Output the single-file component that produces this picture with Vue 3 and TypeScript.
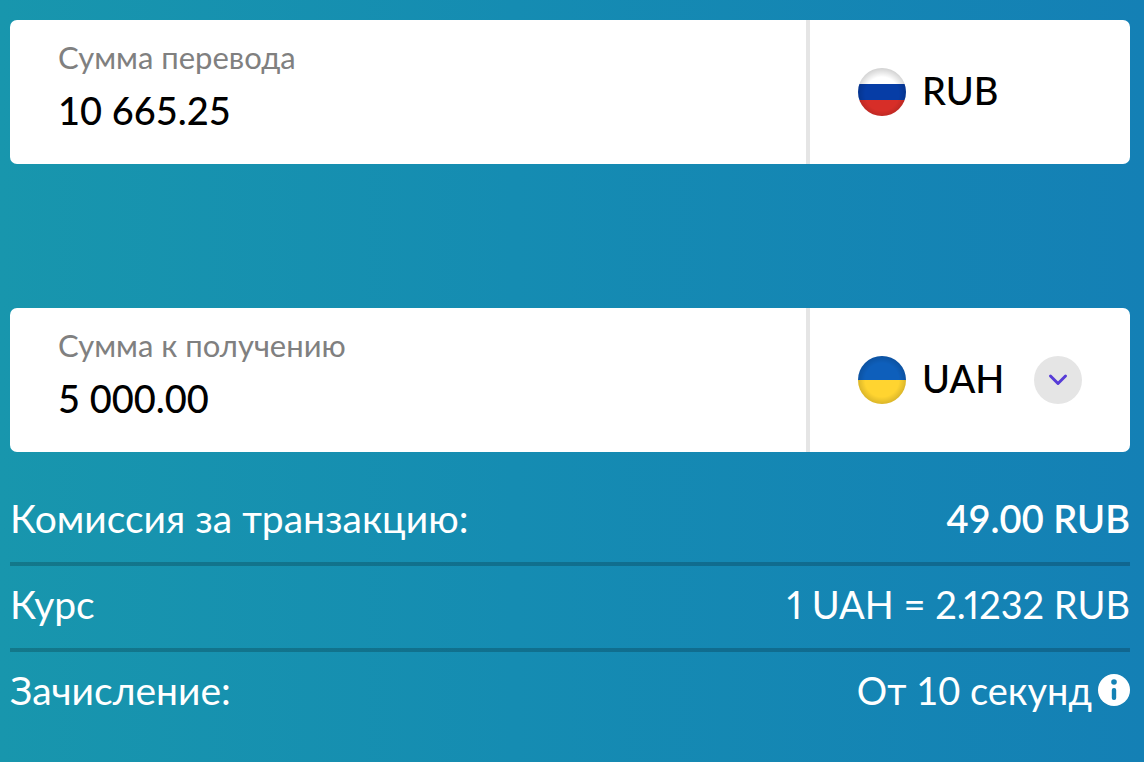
<script setup lang="ts">
import { ref } from 'vue'

const sendAmount = ref('10 665.25')
const receiveAmount = ref('5 000.00')
const receiveCurrency = ref('UAH')
</script>

<template>
  <main class="page">
    <form class="calculator" @submit.prevent>
      <section class="card">
        <div class="amount">
          <label class="amount-label" for="send-amount">Сумма перевода</label>
          <input id="send-amount" v-model="sendAmount" class="amount-input" type="text" inputmode="decimal" />
        </div>
        <div class="currency">
          <svg class="flag" viewBox="0 0 48 48" aria-hidden="true">
            <defs>
              <clipPath id="ru-clip"><circle cx="24" cy="24" r="24" /></clipPath>
              <radialGradient id="ru-shade" cy="0.54" r="0.54">
                <stop offset="0.65" stop-color="#000" stop-opacity="0" />
                <stop offset="1" stop-color="#000" stop-opacity="0.18" />
              </radialGradient>
            </defs>
            <g clip-path="url(#ru-clip)">
              <rect width="48" height="16" fill="#fff" />
              <rect y="16" width="48" height="16" fill="#063da6" />
              <rect y="32" width="48" height="16" fill="#d72e28" />
              <rect width="48" height="48" fill="url(#ru-shade)" />
            </g>
          </svg>
          <span class="code">RUB</span>
        </div>
      </section>

      <section class="card">
        <div class="amount">
          <label class="amount-label" for="receive-amount">Сумма к получению</label>
          <input id="receive-amount" v-model="receiveAmount" class="amount-input" type="text" inputmode="decimal" />
        </div>
        <div class="currency">
          <svg class="flag" viewBox="0 0 48 48" aria-hidden="true">
            <defs>
              <clipPath id="ua-clip"><circle cx="24" cy="24" r="24" /></clipPath>
              <radialGradient id="ua-shade" r="0.54">
                <stop offset="0.65" stop-color="#000" stop-opacity="0" />
                <stop offset="1" stop-color="#000" stop-opacity="0.18" />
              </radialGradient>
            </defs>
            <g clip-path="url(#ua-clip)">
              <rect width="48" height="24" fill="#0e5fbb" />
              <rect y="24" width="48" height="24" fill="#ffd430" />
              <rect width="48" height="48" fill="url(#ua-shade)" />
            </g>
          </svg>
          <select v-model="receiveCurrency" class="code code-select" aria-label="Валюта получения">
            <option value="UAH">UAH</option>
          </select>
          <svg class="chevron" viewBox="0 0 48 48" aria-hidden="true">
            <circle cx="24" cy="24" r="24" fill="#e5e5e5" />
            <path d="M16.5 20 24 27.5 31.5 20" fill="none" stroke="#573cd7" stroke-width="3" stroke-linecap="round" stroke-linejoin="round" />
          </svg>
        </div>
      </section>
    </form>

    <dl class="details">
      <div class="row">
        <dt>Комиссия за транзакцию:</dt>
        <dd class="strong">49.00 RUB</dd>
      </div>
      <div class="row">
        <dt>Курс</dt>
        <dd class="rate">1 UAH = 2.1232 RUB</dd>
      </div>
      <div class="row">
        <dt>Зачисление:</dt>
        <dd>
          От 10 секунд
          <button class="info" type="button" aria-label="Подробнее о сроках">
            <svg viewBox="0 0 32 32" aria-hidden="true">
              <circle cx="16" cy="16" r="16" fill="#fff" />
              <circle cx="16" cy="8" r="2.8" fill="#1482b4" />
              <rect x="13.8" y="14" width="4.4" height="12" rx="2" fill="#1482b4" />
            </svg>
          </button>
        </dd>
      </div>
    </dl>
  </main>
</template>

<style>
body {
  margin: 0;
}
</style>

<style scoped>
.page {
  box-sizing: border-box;
  min-height: 100vh;
  padding: 20px 14px 20px 10px;
  background: linear-gradient(90deg, #1896ad 0%, #158cb2 45%, #1480b5 100%);
  color: #fff;
  font-family: Lato, "Noto Sans", sans-serif;
  font-size: 38px;
  line-height: 44px;
}

.calculator {
  display: flex;
  flex-direction: column;
  gap: 144px;
}

.card {
  display: flex;
  min-height: 144px;
  border-radius: 7px;
  background: #fff;
  color: #000;
}

.amount {
  display: flex;
  flex: 1;
  flex-direction: column;
  gap: 12px;
  box-sizing: border-box;
  min-width: 0;
  padding: 20px 48px;
}

.amount-label {
  color: #808080;
  font-size: 31px;
  line-height: 34px;
}

.amount-input {
  width: 100%;
  height: 48px;
  padding: 0;
  border: 0;
  outline: 0;
  background: transparent;
  color: inherit;
  font: inherit;
  font-weight: 500;
}

.currency {
  display: flex;
  box-sizing: border-box;
  flex: 0 0 324px;
  align-items: center;
  gap: 16px;
  padding: 0 48px;
  border-left: 4px solid #e5e5e5;
}

.flag,
.chevron {
  flex: none;
  width: 48px;
  height: 48px;
}

.code {
  box-sizing: border-box;
  flex: 1;
  height: 48px;
  min-width: 0;
  padding: 0 0 4px;
  font-weight: 500;
}

.code-select {
  border: 0;
  outline: 0;
  appearance: none;
  background: transparent;
  color: inherit;
  font-family: inherit;
  font-size: inherit;
  line-height: inherit;
}

.details {
  margin: 28px 0 0;
}

.row {
  display: flex;
  justify-content: space-between;
  gap: 24px;
  padding: 16px 0 22px;
}

.row + .row {
  border-top: 4px solid rgba(0, 0, 0, 0.2);
}

.row dt {
  font-size: 39px;
}

.row dd {
  display: flex;
  align-items: center;
  gap: 6px;
  margin: 0;
}

.row .strong {
  font-weight: 600;
}

.row .rate {
  font-variant-numeric: proportional-nums;
}

.info {
  display: flex;
  width: 32px;
  height: 32px;
  padding: 0;
  border: 0;
  background: transparent;
  cursor: pointer;
}
</style>
